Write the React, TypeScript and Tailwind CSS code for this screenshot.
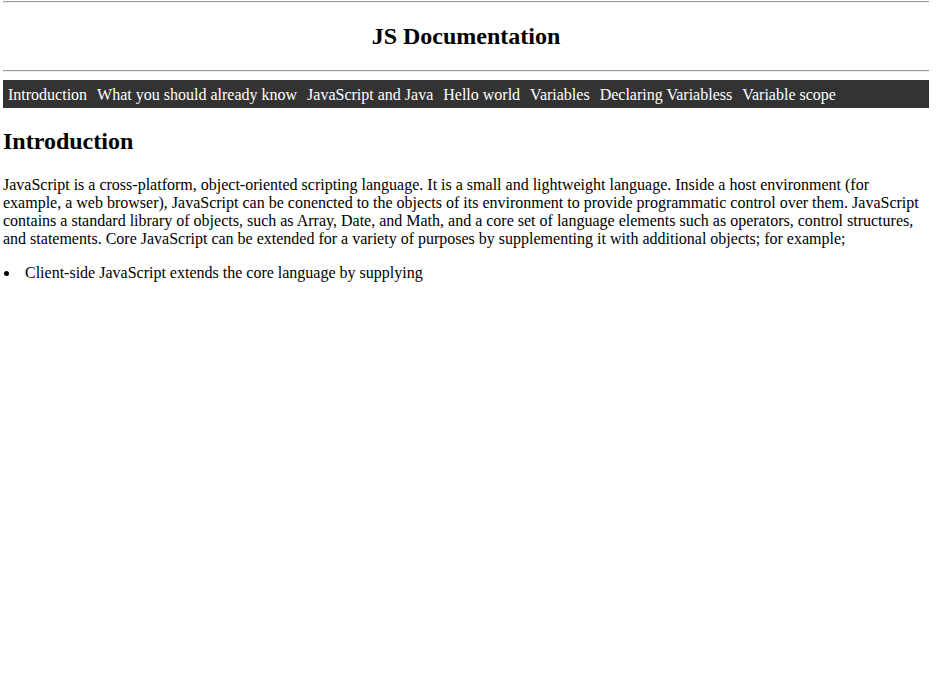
const links = [
  'Introduction',
  'What you should already know',
  'JavaScript and Java',
  'Hello world',
  'Variables',
  'Declaring Variabless',
  'Variable scope',
]

export default function App() {
  return (
    <div className="min-h-screen bg-white text-black font-['Liberation_Serif',serif] text-[16px] leading-[18px]">
      <div className="ml-[3px] w-[926px]">
        <header>
          <div className="mt-[1px] h-[2px] border-t border-t-[#9a9a9a] border-b border-b-[#eeeeee]" />
          <h1 className="text-center text-[24px] leading-[28px] font-bold pt-[19px] pb-[20px]">JS Documentation</h1>
          <div className="h-[2px] border-t border-t-[#9a9a9a] border-b border-b-[#eeeeee]" />
        </header>
        <nav className="mt-[8px] bg-[#333333] flex pt-[6px] pb-[4px] px-0">
          {links.map((l) => (
            <a key={l} href="#" className="text-white px-[5px] leading-[18px] whitespace-nowrap">
              {l}
            </a>
          ))}
        </nav>
        <main>
          <h2 className="text-[24px] leading-[28px] font-bold mt-[19px] mb-[21px]">Introduction</h2>
          <p>
            JavaScript is a cross-platform, object-oriented scripting language. It is a small and lightweight language.
            Inside a host environment (for example, a web browser), JavaScript can be conencted to the objects of its
            environment to provide programmatic control over them. JavaScript contains a standard library of objects,
            such as Array, Date, and Math, and a core set of language elements such as operators, control structures,
            and statements. Core JavaScript can be extended for a variety of purposes by supplementing it with
            additional objects; for example;
          </p>
          <ul className="mt-[16px]">
            <li className="flex items-center">
              <span className="ml-[1px] w-[5px] h-[5px] rounded-full bg-black shrink-0" />
              <span className="ml-[16px]">Client-side JavaScript extends the core language by supplying</span>
            </li>
          </ul>
        </main>
      </div>
    </div>
  )
}
